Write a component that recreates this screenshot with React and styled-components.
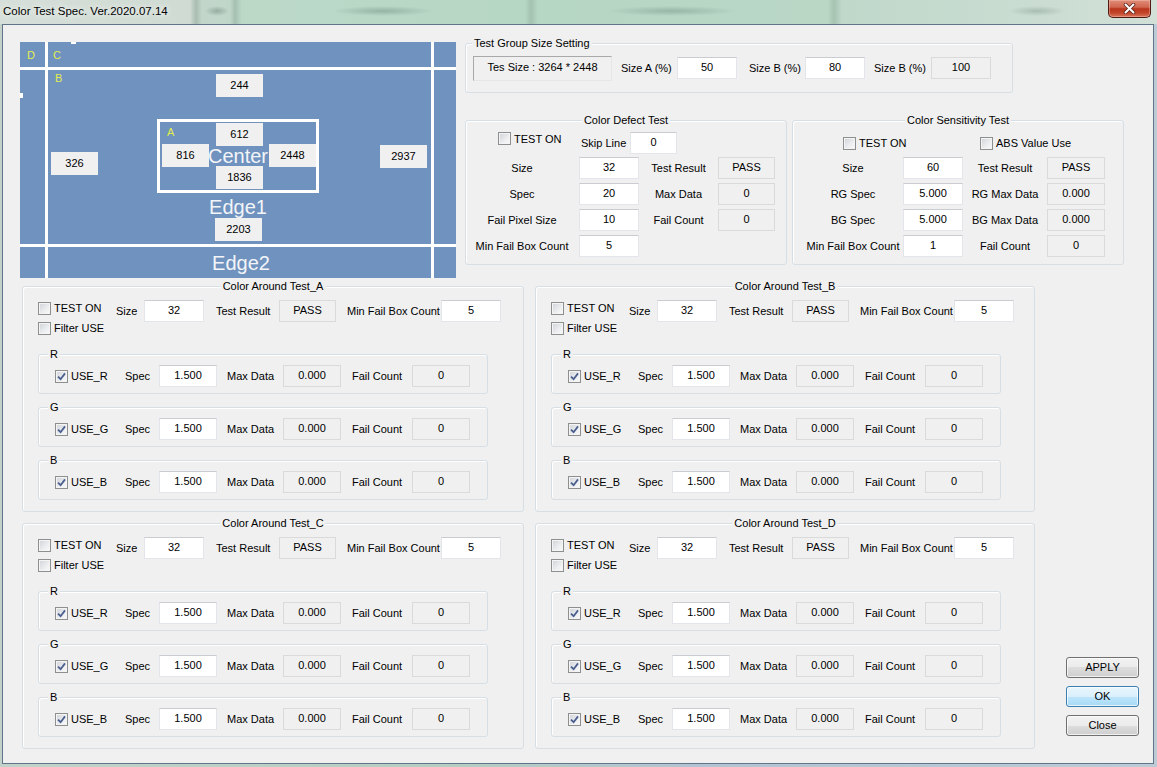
import React from "react";
import styled, { createGlobalStyle } from "styled-components";

const GlobalStyle = createGlobalStyle`
  * { box-sizing: border-box; }
  html, body { margin: 0; padding: 0; }
  body {
    width: 1157px;
    height: 767px;
    overflow: hidden;
    background: #b7c7d4;
    font-family: "Liberation Sans", Arial, sans-serif;
    font-size: 11px;
    color: #000;
  }
`;

const Window = styled.div`
  width: 1157px;
  height: 767px;
  display: flex;
  flex-direction: column;
  background: linear-gradient(90deg, #c2d2ca, #b5cdc3 40%, #b4c3d3 60%, #bccbd6);
`;

const TitleBar = styled.div`
  height: 24px;
  flex: none;
  display: flex;
  justify-content: space-between;
  align-items: flex-start;
  background:
    radial-gradient(ellipse 12px 5px at 217px 11px, rgba(70, 95, 85, 0.35), transparent),
    radial-gradient(ellipse 50px 5px at 383px 11px, rgba(70, 95, 85, 0.3), transparent),
    radial-gradient(ellipse 65px 5px at 672px 11px, rgba(70, 95, 85, 0.28), transparent),
    radial-gradient(ellipse 28px 5px at 1037px 11px, rgba(70, 95, 85, 0.25), transparent),
    linear-gradient(
      90deg,
      #d6dfd9 0px,
      #cfdbd3 190px,
      #a9bdb1 196px,
      #c2d6ca 202px,
      #bfd7c9 230px,
      #a6c0b0 235px,
      #bcd9c8 242px,
      #b6d7c4 525px,
      #a3c3b0 531px,
      #b6d7c4 538px,
      #bad7c6 828px,
      #a6c2b1 834px,
      #bfd8ca 842px,
      #c8dcd0 1000px,
      #d2e0d8 1157px
    );
`;

const Title = styled.div`
  padding-left: 3px;
  line-height: 22px;
  font-size: 11.5px;
  color: #000;
  text-shadow: 0 0 6px rgba(255, 255, 255, 0.9), 0 0 10px rgba(255, 255, 255, 0.7);
`;

const CloseBtn = styled.div`
  width: 43px;
  height: 18px;
  margin-right: 6px;
  border: 1px solid #4e1a12;
  border-top: none;
  border-radius: 0 0 5px 5px;
  background: linear-gradient(#e08c78 0%, #d06650 42%, #b9351c 52%, #c2452a 75%, #d9735a 100%);
  box-shadow: inset 0 0 0 1px rgba(255, 220, 210, 0.35);
  display: flex;
  align-items: center;
  justify-content: center;
`;

const Client = styled.div`
  flex: 1;
  margin: 0 3px 3px 2px;
  border: 1px solid #617588;
  background: #f0f0f0;
  padding: 17px 0 0 17px;
  display: flex;
  flex-direction: column;
`;

const TopRow = styled.div`
  display: flex;
  gap: 9px;
  height: 236px;
`;

const Row = styled.div`
  display: flex;
  align-items: flex-start;
  margin-top: ${(p) => p.$mt}px;
  margin-left: ${(p) => p.$ml || 0}px;
`;

/* image preview canvas */
const Canvas = styled.div`
  position: relative;
  width: 436px;
  height: 236px;
  flex: none;
  background: #7092be;
  overflow: hidden;
`;

const HLine = styled.div`
  position: absolute;
  left: 0;
  right: 0;
  top: ${(p) => p.$y}px;
  height: 3px;
  background: #fff;
`;

const VLine = styled.div`
  position: absolute;
  top: 0;
  bottom: 0;
  left: ${(p) => p.$x}px;
  width: 3px;
  background: #fff;
`;

const Mark = styled.div`
  position: absolute;
  left: ${(p) => p.$x}px;
  top: ${(p) => p.$y}px;
  width: ${(p) => p.$w}px;
  height: ${(p) => p.$h}px;
  background: #fff;
`;

const InnerRect = styled.div`
  position: absolute;
  left: 137px;
  top: 77px;
  width: 162px;
  height: 74px;
  border: 3px solid #fff;
`;

const Zone = styled.div`
  position: absolute;
  left: ${(p) => p.$x}px;
  top: ${(p) => p.$y}px;
  color: #e2ee4e;
  font-size: 11px;
  line-height: 13px;
`;

const BigText = styled.div`
  position: absolute;
  left: ${(p) => p.$x}px;
  top: ${(p) => p.$y}px;
  transform: translate(-50%, -50%);
  color: #f3f5f9;
  font-size: 20px;
  line-height: 1;
  white-space: nowrap;
`;

const ValueBox = styled.div`
  position: absolute;
  left: ${(p) => p.$x}px;
  top: ${(p) => p.$y}px;
  width: 47px;
  height: 23px;
  background: #f0f0f0;
  display: flex;
  align-items: center;
  justify-content: center;
  padding-bottom: 2px;
`;

/* dialog controls */
const Group = styled.div`
  position: relative;
  flex: none;
  width: ${(p) => p.$w}px;
  height: ${(p) => p.$h}px;
  margin-top: ${(p) => p.$mt || 0}px;
  border: 1px solid #d5dfe5;
  border-radius: 3px;
  box-shadow: inset 1px 1px 0 #fff;
`;

const Legend = styled.span`
  position: absolute;
  top: -7px;
  left: ${(p) => (p.$center ? "50%" : `${p.$left}px`)};
  transform: ${(p) => (p.$center ? "translateX(-50%)" : "none")};
  padding: 0 2px;
  background: #f0f0f0;
  line-height: 13px;
  white-space: nowrap;
`;

const Label = styled.div`
  flex: none;
  width: ${(p) => p.$w}px;
  padding-left: ${(p) => p.$pl || 0}px;
  text-align: ${(p) => (p.$center ? "center" : "left")};
  white-space: nowrap;
`;

const Edit = styled.input`
  flex: none;
  width: ${(p) => p.$w}px;
  height: 22px;
  margin: 0 0 0 ${(p) => p.$ml || 0}px;
  border: 1px solid #e2e6ea;
  border-top-color: #c9cdd2;
  background: #fff;
  font: 11px "Liberation Sans", Arial, sans-serif;
  color: #000;
  text-align: center;
  padding: 0 0 2px;
  outline: none;
`;

const Static = styled.div`
  flex: none;
  width: ${(p) => p.$w}px;
  height: ${(p) => p.$h || 22}px;
  border: 1px solid #dadada;
  border-color: ${(p) => (p.$sunken ? "#a9a9a9 #e6e6e6 #e6e6e6 #a9a9a9" : "#dadada")};
  background: #f0f0f0;
  display: flex;
  align-items: center;
  justify-content: center;
  padding-bottom: 2px;
  white-space: nowrap;
`;

const FieldLine = styled.div`
  display: flex;
  align-items: center;
  height: ${(p) => p.$h || 22}px;
  margin-top: ${(p) => p.$mt || 0}px;
  padding-left: ${(p) => p.$pl || 0}px;
`;

const FieldStack = styled.div`
  display: flex;
  flex-direction: column;
  gap: 4px;
  margin-top: ${(p) => p.$mt}px;
`;

const CheckWrap = styled.label`
  flex: none;
  display: flex;
  align-items: center;
  gap: 3px;
  width: ${(p) => (p.$w ? `${p.$w}px` : "auto")};
  height: ${(p) => p.$h || 13}px;
  align-self: ${(p) => (p.$top ? "flex-start" : "auto")};
  white-space: nowrap;
`;

const CheckBox = styled.span`
  flex: none;
  width: 13px;
  height: 13px;
  border: 1px solid #8e8f8f;
  background: linear-gradient(135deg, #cfd2d7 0%, #eceef0 60%, #fafafa 100%);
  box-shadow: inset 0 0 0 1px #f4f4f4;
  display: flex;
  align-items: center;
  justify-content: center;
`;

const CheckCol = styled.div`
  flex: none;
  width: 78px;
  display: flex;
  flex-direction: column;
`;

const AroundTop = styled.div`
  display: flex;
  margin: 11px 0 0 15px;
`;

const SubList = styled.div`
  display: flex;
  flex-direction: column;
  gap: 13px;
  margin: 16px 0 0 15px;
`;

const ButtonCol = styled.div`
  display: flex;
  flex-direction: column;
  gap: 8px;
  margin: 0 0 13px 31px;
  align-self: flex-end;
`;

const Button = styled.button`
  width: 73px;
  height: 21px;
  padding: 0 0 1px;
  border: 1px solid ${(p) => (p.$default ? "#3c7fb1" : "#707070")};
  border-radius: 3px;
  background: ${(p) =>
    p.$default
      ? "linear-gradient(#eaf6fd 0%, #d9f0fc 50%, #bee6fd 50%, #a7d9f5 100%)"
      : "linear-gradient(#f2f2f2 0%, #ebebeb 50%, #dddddd 50%, #cfcfcf 100%)"};
  box-shadow: inset 0 0 0 1px rgba(255, 255, 255, 0.7);
  font: 11px "Liberation Sans", Arial, sans-serif;
  color: #000;
`;

const RightCol = styled.div`
  display: flex;
  flex-direction: column;
`;

const Pair = styled.div`
  display: flex;
  gap: 5px;
  margin-top: 27px;
`;

const Pairs = styled.div`
  display: flex;
  gap: 11px;
`;

function Check({ label, checked, w, h, top }) {
  return (
    <CheckWrap $w={w} $h={h} $top={top}>
      <CheckBox>
        {checked && (
          <svg width="9" height="9" viewBox="0 0 9 9">
            <path d="M1 4.6 L3.6 7.2 L8 1.4" fill="none" stroke="#4b5f8f" strokeWidth="1.8" />
          </svg>
        )}
      </CheckBox>
      <span>{label}</span>
    </CheckWrap>
  );
}

function Preview() {
  const boxes = [
    ["244", 196, 32],
    ["612", 196, 81],
    ["816", 142, 102],
    ["2448", 249, 102],
    ["1836", 196, 124],
    ["326", 31, 110],
    ["2937", 360, 103],
    ["2203", 195, 176],
  ];
  return (
    <Canvas>
      <HLine $y={25} />
      <HLine $y={202} />
      <VLine $x={25} />
      <VLine $x={411} />
      <Mark $x={51} $y={0} $w={5} $h={2} />
      <Mark $x={0} $y={51} $w={3} $h={5} />
      <InnerRect />
      <Zone $x={7} $y={7}>D</Zone>
      <Zone $x={33} $y={7}>C</Zone>
      <Zone $x={35} $y={30}>B</Zone>
      <Zone $x={147} $y={84}>A</Zone>
      <BigText $x={218} $y={114}>Center</BigText>
      <BigText $x={218} $y={165}>Edge1</BigText>
      <BigText $x={221} $y={221}>Edge2</BigText>
      {boxes.map(([v, x, y]) => (
        <ValueBox key={v} $x={x} $y={y}>
          {v}
        </ValueBox>
      ))}
    </Canvas>
  );
}

function SizeSetting() {
  return (
    <Group $w={548} $h={50} $mt={1}>
      <Legend $left={6}>Test Group Size Setting</Legend>
      <FieldLine $h={48} $pl={7}>
        <Static $w={139} $h={25} $sunken>
          Tes Size : 3264 * 2448
        </Static>
        <Label $w={65} $pl={9}>
          Size A (%)
        </Label>
        <Edit $w={60} defaultValue="50" />
        <Label $w={68} $pl={12}>
          Size B (%)
        </Label>
        <Edit $w={60} defaultValue="80" />
        <Label $w={66} $pl={9}>
          Size B (%)
        </Label>
        <Static $w={60}>100</Static>
      </FieldLine>
    </Group>
  );
}

function DefectTest() {
  const rows = [
    ["Size", "32", "Test Result", "PASS"],
    ["Spec", "20", "Max Data", "0"],
    ["Fail Pixel Size", "10", "Fail Count", "0"],
    ["Min Fail Box Count", "5"],
  ];
  return (
    <Group $w={322} $h={145}>
      <Legend $center>Color Defect Test</Legend>
      <FieldLine $mt={11} $pl={32}>
        <Check label="TEST ON" w={83} top />
        <Label $w={49}>Skip Line</Label>
        <Edit $w={47} defaultValue="0" />
      </FieldLine>
      <FieldStack $mt={3}>
        {rows.map(([l1, v1, l2, v2]) => (
          <FieldLine key={l1}>
            <Label $w={112} $center>
              {l1}
            </Label>
            <Edit $w={60} $ml={1} defaultValue={v1} />
            {l2 && (
              <>
                <Label $w={79} $center>
                  {l2}
                </Label>
                <Static $w={57}>{v2}</Static>
              </>
            )}
          </FieldLine>
        ))}
      </FieldStack>
    </Group>
  );
}

function SensitivityTest() {
  const rows = [
    ["Size", "60", "Test Result", "PASS"],
    ["RG Spec", "5.000", "RG Max Data", "0.000"],
    ["BG Spec", "5.000", "BG Max Data", "0.000"],
    ["Min Fail Box Count", "1", "Fail Count", "0"],
  ];
  return (
    <Group $w={332} $h={145}>
      <Legend $center>Color Sensitivity Test</Legend>
      <FieldLine $mt={11} $pl={50}>
        <Check label="TEST ON" w={137} />
        <Check label="ABS Value Use" />
      </FieldLine>
      <FieldStack $mt={3}>
        {rows.map(([l1, v1, l2, v2]) => (
          <FieldLine key={l1}>
            <Label $w={110} $pl={10} $center>
              {l1}
            </Label>
            <Edit $w={60} defaultValue={v1} />
            <Label $w={84} $center>
              {l2}
            </Label>
            <Static $w={58}>{v2}</Static>
          </FieldLine>
        ))}
      </FieldStack>
    </Group>
  );
}

function Channel({ ch }) {
  return (
    <Group $w={450} $h={40}>
      <Legend $left={9}>{ch}</Legend>
      <FieldLine $mt={10} $pl={16}>
        <Check label={`USE_${ch}`} checked w={70} />
        <Label $w={34}>Spec</Label>
        <Edit $w={58} defaultValue="1.500" />
        <Label $w={66} $pl={10}>
          Max Data
        </Label>
        <Static $w={58}>0.000</Static>
        <Label $w={71} $pl={11}>
          Fail Count
        </Label>
        <Static $w={58}>0</Static>
      </FieldLine>
    </Group>
  );
}

function AroundTest({ name, w }) {
  return (
    <Group $w={w} $h={226}>
      <Legend $center>Color Around Test_{name}</Legend>
      <AroundTop>
        <CheckCol>
          <Check label="TEST ON" h={20} />
          <Check label="Filter USE" h={20} />
        </CheckCol>
        <FieldLine $mt={2}>
          <Label $w={28}>Size</Label>
          <Edit $w={60} defaultValue="32" />
          <Label $w={75} $pl={12}>
            Test Result
          </Label>
          <Static $w={57}>PASS</Static>
          <Label $w={105} $pl={11}>
            Min Fail Box Count
          </Label>
          <Edit $w={60} defaultValue="5" />
        </FieldLine>
      </AroundTop>
      <SubList>
        {["R", "G", "B"].map((c) => (
          <Channel key={c} ch={c} />
        ))}
      </SubList>
    </Group>
  );
}

export default function App() {
  return (
    <>
      <GlobalStyle />
      <Window>
        <TitleBar>
          <Title>Color Test Spec. Ver.2020.07.14</Title>
          <CloseBtn>
            <svg width="13" height="11" viewBox="0 0 13 11">
              <path d="M2.5 1.5 L10.5 9.5 M10.5 1.5 L2.5 9.5" stroke="#5b2419" strokeWidth="3.6" strokeLinecap="round" />
              <path d="M2.5 1.5 L10.5 9.5 M10.5 1.5 L2.5 9.5" stroke="#fff" strokeWidth="2" strokeLinecap="round" />
            </svg>
          </CloseBtn>
        </TitleBar>
        <Client>
          <TopRow>
            <Preview />
            <RightCol>
              <SizeSetting />
              <Pair>
                <DefectTest />
                <SensitivityTest />
              </Pair>
            </RightCol>
          </TopRow>
          <Row $mt={8} $ml={2}>
            <Pairs>
              <AroundTest name="A" w={502} />
              <AroundTest name="B" w={500} />
            </Pairs>
          </Row>
          <Row $mt={11} $ml={2}>
            <Pairs>
              <AroundTest name="C" w={502} />
              <AroundTest name="D" w={500} />
            </Pairs>
            <ButtonCol>
              <Button>APPLY</Button>
              <Button $default>OK</Button>
              <Button>Close</Button>
            </ButtonCol>
          </Row>
        </Client>
      </Window>
    </>
  );
}
